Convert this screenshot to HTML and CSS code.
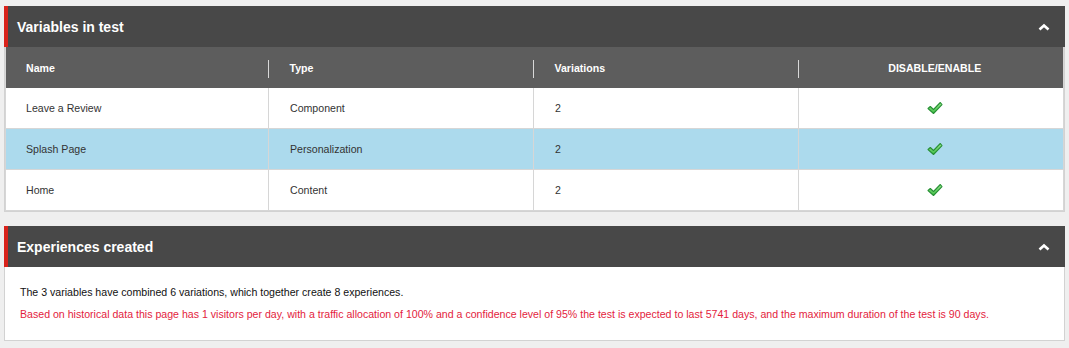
FILE: index.html
```html
<!DOCTYPE html>
<html lang="en">
<head>
  <meta charset="UTF-8">
  <title>Test variables</title>
  <link rel="stylesheet" href="styles.css">
</head>
<body>
  <div class="panel">
    <div class="panel-header">
      <h2>Variables in test</h2>
      <svg class="chevron" width="12" height="8" viewBox="0 0 12 8"><polyline points="1.5,6.5 6,2.5 10.5,6.5" fill="none" stroke="#fff" stroke-width="2.6"/></svg>
    </div>
    <div class="panel-body">
      <table class="variables">
        <colgroup>
          <col class="col-name">
          <col class="col-type">
          <col class="col-variations">
          <col>
        </colgroup>
        <tr>
          <th>Name</th>
          <th>Type</th>
          <th>Variations</th>
          <th class="center">DISABLE/ENABLE</th>
        </tr>
        <tr>
          <td>Leave a Review</td>
          <td>Component</td>
          <td>2</td>
          <td class="center"><svg class="check" width="16" height="14" viewBox="0 0 16 14"><defs><linearGradient id="g" x1="0" y1="0" x2="0" y2="1"><stop offset="0" stop-color="#9be58f"/><stop offset="1" stop-color="#3fbf45"/></linearGradient></defs><polygon points="1,7.5 3.3,5.5 6.5,8.5 13.3,1.5 15,3.6 6.5,12.5" fill="url(#g)" stroke="#279035" stroke-width="1.1" stroke-linejoin="round"/></svg></td>
        </tr>
        <tr class="selected">
          <td>Splash Page</td>
          <td>Personalization</td>
          <td>2</td>
          <td class="center"><svg class="check" width="16" height="14" viewBox="0 0 16 14"><polygon points="1,7.5 3.3,5.5 6.5,8.5 13.3,1.5 15,3.6 6.5,12.5" fill="url(#g)" stroke="#279035" stroke-width="1.1" stroke-linejoin="round"/></svg></td>
        </tr>
        <tr>
          <td>Home</td>
          <td>Content</td>
          <td>2</td>
          <td class="center"><svg class="check" width="16" height="14" viewBox="0 0 16 14"><polygon points="1,7.5 3.3,5.5 6.5,8.5 13.3,1.5 15,3.6 6.5,12.5" fill="url(#g)" stroke="#279035" stroke-width="1.1" stroke-linejoin="round"/></svg></td>
        </tr>
      </table>
    </div>
  </div>

  <div class="panel">
    <div class="panel-header">
      <h2>Experiences created</h2>
      <svg class="chevron" width="12" height="8" viewBox="0 0 12 8"><polyline points="1.5,6.5 6,2.5 10.5,6.5" fill="none" stroke="#fff" stroke-width="2.6"/></svg>
    </div>
    <div class="panel-body text-body">
      <p>The 3 variables have combined 6 variations, which together create 8 experiences.</p>
      <p class="warning">Based on historical data this page has 1 visitors per day, with a traffic allocation of 100% and a confidence level of 95% the test is expected to last 5741 days, and the maximum duration of the test is 90 days.</p>
    </div>
  </div>
</body>
</html>
```

FILE: styles.css
```css
body {
  margin: 0;
  padding: 6px 4px;
  background-color: #efefef;
  font-family: "Liberation Sans", Arial, sans-serif;
  font-size: 10.6px;
  color: #333;
}

.panel {
  width: 1061px;
  margin-bottom: 14px;
}

.panel-header {
  display: flex;
  align-items: center;
  justify-content: space-between;
  height: 41px;
  background-color: #484848;
  border-left: 4px solid #d9231b;
  padding: 0 15px 0 9px;
}

.panel-header h2 {
  margin: 0;
  font-size: 14px;
  font-weight: bold;
  color: #fff;
}

.chevron {
  display: block;
}

.panel-body {
  background-color: #fff;
  border: 1px solid #d2d2d2;
  border-top: none;
}

.variables {
  width: 100%;
  border-collapse: collapse;
  table-layout: fixed;
  border-left: 1px solid #d6d6d6;
  border-right: 1px solid #d6d6d6;
}

.col-name {
  width: 263px;
}

.col-type,
.col-variations {
  width: 265px;
}

.variables th,
.variables td {
  padding: 0 20px 0 21px;
}

.variables th:first-child,
.variables td:first-child {
  padding-left: 20px;
}

.variables th {
  position: relative;
  height: 41px;
  background-color: #5d5d5d;
  color: #fff;
  font-weight: bold;
  text-align: left;
}

.variables th + th::before {
  content: "";
  position: absolute;
  left: -1px;
  top: 13px;
  height: 18px;
  border-left: 1px solid #d8d8d8;
}

.variables td {
  height: 40px;
  border-right: 1px solid #d6d6d6;
  border-bottom: 1px solid #d6d6d6;
  color: #333;
}

.variables td:last-child {
  border-right: none;
}

.variables th.center,
.variables td.center {
  text-align: center;
  padding: 0 12px 0 20px;
}

.variables tr.selected td {
  background-color: #acdaed;
}

.check {
  display: inline-block;
  vertical-align: middle;
}

.text-body {
  padding: 18px 15px;
}

.text-body p {
  margin: 0;
  line-height: 15px;
  color: #111;
}

.text-body p + p {
  margin-top: 7px;
}

.text-body .warning {
  color: #e31c3d;
}
```
